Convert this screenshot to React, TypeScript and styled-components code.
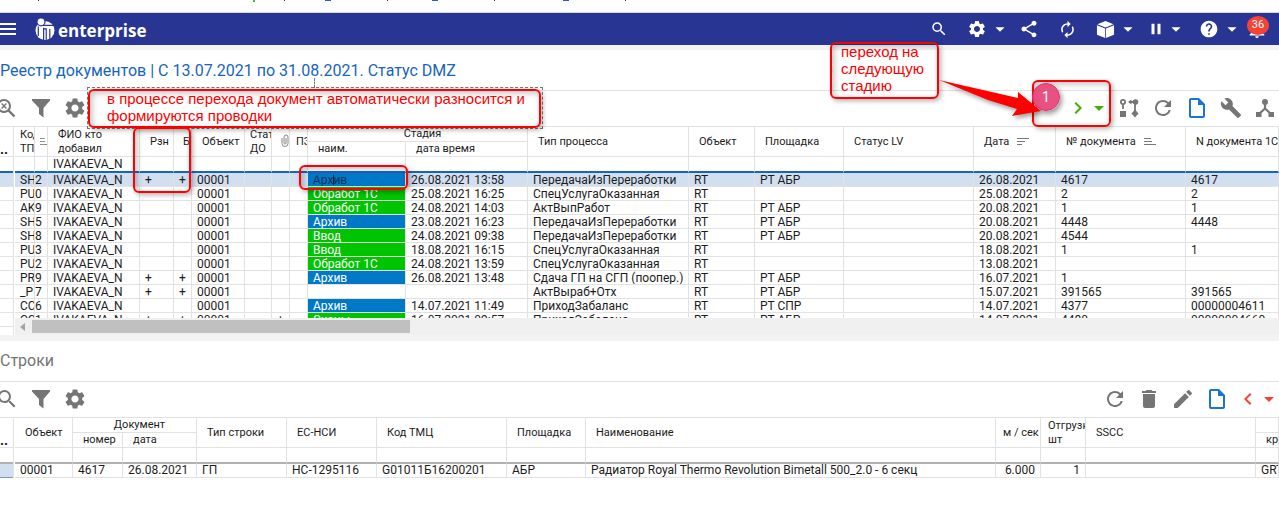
import React from "react";
import styled, { createGlobalStyle, css } from "styled-components";
import {
  MdArrowDropDown,
  MdAutorenew,
  MdBuild,
  MdChevronLeft,
  MdChevronRight,
  MdDelete,
  MdEdit,
  MdHelp,
  MdNotifications,
  MdOutlineInsertDriveFile,
  MdPause,
  MdRefresh,
  MdSearch,
  MdSettings,
  MdShare,
} from "react-icons/md";

const c = {
  bar: "#283593",
  band: "#f1f3f5",
  line: "#e2e2e2",
  accent: "#1565c0",
  icon: "#757575",
  text: "#1c1c1c",
  selected: "#d1dff1",
  green: "#00c400",
  blue: "#0078c8",
  mark: "#ff0000",
};

const GlobalStyle = createGlobalStyle`
  * { box-sizing: border-box; }
  body { margin: 0; background: #fff; color: ${c.text}; font-family: Roboto, "Liberation Sans", sans-serif; overflow: hidden; }
`;

const Page = styled.div`
  position: relative;
  overflow: hidden;
`;

const TopStrip = styled.div`
  height: 13px;
  border-bottom: 1px solid #d6d6d6;
  svg { display: block; }
`;

const AppBar = styled.header`
  height: 32px;
  display: flex;
  align-items: center;
  background: ${c.bar};
  color: #fff;
  padding-right: 8px;
`;

const MenuButton = styled.button`
  border: 0;
  padding: 0;
  background: none;
  display: flex;
  margin-right: 18px;
`;

const Brand = styled.a`
  display: flex;
  align-items: center;
  gap: 3px;
  color: #fff;
  text-decoration: none;
  font: 700 17px/24px "Open Sans", sans-serif;
`;

const BrandName = styled.span`
  padding-top: 3px;
`;

const BarTools = styled.div`
  display: flex;
  align-items: center;
  margin-left: auto;
`;

const BarButton = styled.button<{ $width?: number; $before?: number }>`
  position: relative;
  width: ${(p) => p.$width ?? 24}px;
  height: 32px;
  margin: 0 0 0 ${(p) => p.$before ?? 0}px;
  padding: 0;
  border: 0;
  background: none;
  color: #fff;
  display: flex;
  align-items: center;
  justify-content: center;
  flex: none;
`;

const BellButton = styled(BarButton)`
  align-items: flex-end;
  padding-bottom: 5px;
`;

const Badge = styled.span`
  position: absolute;
  top: 3px;
  left: 4px;
  width: 22px;
  height: 19px;
  border-radius: 50%;
  background: #f44336;
  font: 11px/18px Roboto, sans-serif;
  text-align: center;
`;

const Band = styled.div<{ $height: number }>`
  height: ${(p) => p.$height}px;
  background: ${c.band};
`;

const PanelTitle = styled.h2<{ $accent?: boolean }>`
  margin: 0;
  height: 41px;
  border-bottom: 1px solid ${c.line};
  color: ${(p) => (p.$accent ? c.accent : c.icon)};
  font-size: 16px;
  line-height: ${(p) => (p.$accent ? 42 : 40)}px;
  font-weight: 400;
  white-space: nowrap;
`;

const Toolbar = styled.div`
  height: 36px;
  display: flex;
  align-items: flex-start;
  padding-top: 3px;
  justify-content: space-between;
  border-bottom: 1px solid ${c.line};
  overflow: hidden;
`;

const ToolSet = styled.div<{ $bleed?: boolean }>`
  display: flex;
  gap: 6px;
  margin-left: ${(p) => (p.$bleed ? -7 : 0)}px;
`;

const ToolPair = styled.div`
  display: flex;
`;

const ToolButton = styled.button<{ $width?: number; $color?: string }>`
  width: ${(p) => p.$width ?? 28}px;
  height: 28px;
  padding: 0;
  border: 0;
  background: none;
  color: ${(p) => p.$color ?? c.icon};
  display: flex;
  align-items: center;
  justify-content: center;
  svg { flex: none; }
`;

const GridPane = styled.div`
  display: flex;
  gap: 1px;
`;

const Gutter = styled.div`
  flex: none;
  width: 14px;
  overflow: hidden;
  border-right: 1px solid ${c.line};
`;

const GutterHead = styled.div`
  height: 30px;
  border-bottom: 1px solid ${c.line};
  font: 700 14px/45px Roboto, sans-serif;
  overflow: hidden;
`;

const GutterFilter = styled.div<{ $rule: string }>`
  height: 16px;
  border-bottom: 2px solid ${(p) => p.$rule};
`;

const GutterRow = styled.div<{ $selected?: boolean; $edge?: string }>`
  height: 14px;
  border-bottom: 1px solid ${(p) => p.$edge ?? c.line};
  background: ${(p) => (p.$selected ? c.selected : "#fff")};
`;

const GridMain = styled.div`
  flex: 1;
  min-width: 0;
`;

const GridView = styled.div<{ $height?: number }>`
  height: ${(p) => (p.$height ? p.$height + "px" : "auto")};
  overflow: hidden;
`;

const HeadRow = styled.tr`
  height: 15px;
`;

const Th = styled.th<{ $pad?: number; $center?: boolean }>`
  padding: 0 0 0 ${(p) => p.$pad ?? 10}px;
  border-right: 1px solid ${c.line};
  border-bottom: 1px solid ${c.line};
  font-size: 11px;
  line-height: 14px;
  font-weight: 400;
  text-align: ${(p) => (p.$center ? "center" : "left")};
  vertical-align: middle;
  white-space: nowrap;
  overflow: hidden;
  svg { vertical-align: -1px; }
`;

const ThLabel = styled.span`
  margin-right: 8px;
`;

const Row = styled.tr<{ $selected?: boolean }>`
  background: ${(p) => (p.$selected ? c.selected : "transparent")};
`;

const cell = css`
  padding: 0 0 0 5px;
  border-right: 1px solid ${c.line};
  font-size: 12px;
  white-space: nowrap;
  overflow: hidden;
`;

const FilterCell = styled.td<{ $rule: string }>`
  ${cell}
  height: 16px;
  line-height: 14px;
  border-bottom: 2px solid ${(p) => p.$rule};
`;

const Td = styled.td<{ $fill?: string; $color?: string; $right?: boolean; $tight?: boolean }>`
  ${cell}
  height: 14px;
  line-height: 13px;
  border-bottom: 1px solid ${c.line};
  ${(p) => p.$tight && "padding-left: 0;"}
  ${(p) => p.$right && "text-align: right; padding-right: 5px;"}
  ${(p) => p.$fill && `background: ${p.$fill}; background-clip: padding-box;`}
  color: ${(p) => p.$color ?? "inherit"};
`;

const Table = styled.table<{ $low?: boolean }>`
  width: 100%;
  table-layout: fixed;
  border-collapse: separate;
  border-spacing: 0;
  ${(p) => p.$low && css`
    ${Th}[rowspan] { padding-top: 1px; }
    ${Td} { padding-top: 2px; line-height: 11px; }
  `}
`;

const ScrollTrack = styled.div`
  height: 17px;
  padding: 2px 0 2px 5px;
  display: flex;
  align-items: center;
  gap: 7px;
  background: #f0f0f0;
`;

const ScrollArrow = styled.span`
  border: 4px solid transparent;
  border-left: 0;
  border-right: 5px solid #a3a3a3;
`;

const ScrollThumb = styled.div`
  width: 30%;
  height: 13px;
  background: #c0c0c0;
`;

/* Review marks lie over the application window. */
const Mark = styled.div<{ $top: number; $left?: number; $right?: number; $w: number; $h: number; $solid?: boolean }>`
  position: absolute;
  top: ${(p) => p.$top}px;
  ${(p) => (p.$left !== undefined ? `left: ${p.$left}px;` : `right: ${p.$right}px;`)}
  width: ${(p) => p.$w}px;
  height: ${(p) => p.$h}px;
  border: 2px solid ${c.mark};
  border-radius: 6px;
  background: ${(p) => (p.$solid ? "#fff" : "transparent")};
  box-shadow: 2px 2px 5px rgba(0, 0, 0, 0.3), inset 2px 2px 6px rgba(0, 0, 0, 0.25);
  pointer-events: none;
`;

const NoteText = styled.p<{ $pad: number }>`
  margin: -1px 0 0;
  padding-left: ${(p) => p.$pad}px;
  color: ${c.mark};
  font: 15px/17px "Liberation Sans", Arial, sans-serif;
  white-space: nowrap;
`;

const Selection = styled.div`
  position: absolute;
  top: 87px;
  left: 87px;
  width: 456px;
  height: 42px;
  border: 1px dashed #777;
  &::before {
    content: "";
    position: absolute;
    left: 226px;
    top: -10px;
    height: 10px;
    border-left: 1px dashed #777;
  }
`;

const StepDot = styled.div`
  position: absolute;
  top: 83px;
  right: 219px;
  width: 28px;
  height: 28px;
  border-radius: 50%;
  background: rgba(232, 62, 118, 0.9);
  border: 1px solid #e0336c;
  box-shadow: 2px 3px 5px rgba(0, 0, 0, 0.4);
  color: #fff;
  font-size: 14px;
  line-height: 26px;
  text-align: center;
`;

const Arrow = styled.svg`
  position: absolute;
  top: 76px;
  right: 234px;
  filter: drop-shadow(2px 3px 2px rgba(0, 0, 0, 0.35));
`;

const TextCaret = styled.i`
  display: inline-block;
  width: 1px;
  height: 10px;
  margin-right: -1px;
  background: #10253c;
  vertical-align: -1px;
`;

const Burger = () => (
  <svg width="17" height="14" viewBox="0 0 17 14" aria-hidden="true">
    <path d="M0 2h16M0 7h16M0 12h16" stroke="#fff" strokeWidth="2" />
  </svg>
);

const Logo = () => (
  <svg width="20" height="23" viewBox="0 0 20 23" aria-hidden="true">
    <circle cx="10" cy="12.500" r="9.500" fill="#fff" />
    <circle cx="6" cy="3.800" r="4.600" fill={c.bar} />
    <path d="M3.300 8.400v9.600M8.600 9.800v12.500M8 7.400h10.500M9 10.900h2.200v10.800M14.800 11v9.800" stroke={c.bar} strokeWidth="1.200" fill="none" />
    <circle cx="6" cy="3.800" r="3.400" fill="#fff" />
  </svg>
);

const Cube = () => (
  <svg width="19" height="19" viewBox="0 0 20 20" aria-hidden="true">
    <path d="M10 1l8.500 3.400L10 7.900 1.500 4.400z" fill="#fff" />
    <path d="M1 5.500l8.600 3.500v10L1 15.400z" fill="#fff" />
    <path d="M19 5.500L10.400 9v10l8.600-3.600z" fill="#fff" />
  </svg>
);

const SearchClear = () => (
  <svg width="22" height="22" viewBox="0 0 22 22" fill="none" stroke="currentColor" aria-hidden="true">
    <circle cx="8" cy="9" r="6" strokeWidth="2" />
    <path d="M12.500 13.500l6 6" strokeWidth="2.400" />
    <path d="M5.600 6.600l4.800 4.800M10.400 6.600l-4.800 4.800" strokeWidth="1.400" />
  </svg>
);

const Funnel = () => (
  <svg width="20" height="20" viewBox="0 0 20 20" fill="currentColor" aria-hidden="true">
    <path d="M1 1h18v1.500l-6.500 7.500V19.500l-4.500-3.500v-6L1 2.500z" />
  </svg>
);

const Flow = () => (
  <svg width="20" height="20" viewBox="0 0 20 20" fill="none" stroke="currentColor" strokeWidth="1.800" aria-hidden="true">
    <circle cx="4" cy="4" r="2.100" />
    <path d="M4 6.500V11M10 4h6M16 4v9" />
    <path d="M12.500 1.500v5L9 4z" fill="currentColor" stroke="none" />
    <circle cx="16.500" cy="4" r="2.800" fill="currentColor" stroke="none" />
    <path d="M1 13h6v6H1zM16 11.500l3.500 4-3.500 4-3.500-4z" fill="currentColor" stroke="none" />
  </svg>
);

const Tree = () => (
  <svg width="20" height="20" viewBox="0 0 20 20" fill="none" stroke="currentColor" strokeWidth="2.200" aria-hidden="true">
    <path d="M10 4v7M10 10.500L3.500 16.500M10 10.500l6.500 6" />
    <circle cx="10" cy="4" r="3" fill="currentColor" stroke="none" />
    <path d="M1 14h5.500v5H1zM13.500 14H19v5h-5.500z" fill="currentColor" stroke="none" />
  </svg>
);

const SortDown = () => (
  <svg width="12" height="9" viewBox="0 0 12 9" stroke="#777" aria-hidden="true">
    <path d="M0 1.500h12M0 4.500h8M0 7.500h5" />
  </svg>
);

const SortUp = ({ w = 12 }: { w?: number }) => (
  <svg width={w} height="9" viewBox="0 0 12 9" preserveAspectRatio="none" stroke="#777" aria-hidden="true">
    <path d="M0 1.500h7M0 4.500h8M0 7.500h12" />
  </svg>
);

const Clip = () => (
  <svg width="8" height="13" viewBox="0 0 8 13" fill="none" stroke="#888" aria-hidden="true">
    <path d="M1 4v5.500a3 3 0 0 0 6 0V3a2 2 0 0 0-4 0v6a1 1 0 0 0 2 0V4" />
  </svg>
);

const Caret = () => <MdArrowDropDown size={24} />;

const docCols = [20, 13, 92, 34, 18, 53, 27, 18, 18, 98, 122, 161, 66, 89, 130, 82, 130];

type Doc = {
  kind: string; no: string; p?: boolean; clip?: string; stage?: string; at?: string;
  process: string; object: string; site?: string; date: string; num?: string; num1c?: string;
};

const docs: Doc[] = [
  { kind: "SH", no: "2", p: true, stage: "Архив", at: "26.08.2021 13:58", process: "ПередачаИзПереработки", object: "RT", site: "РТ АБР", date: "26.08.2021", num: "4617", num1c: "4617" },
  { kind: "PU", no: "0", stage: "Обработ 1С", at: "25.08.2021 16:25", process: "СпецУслугаОказанная", object: "RT", date: "25.08.2021", num: "2", num1c: "2" },
  { kind: "AK", no: "9", stage: "Обработ 1С", at: "24.08.2021 14:03", process: "АктВыпРабот", object: "RT", site: "РТ АБР", date: "20.08.2021", num: "1", num1c: "1" },
  { kind: "SH", no: "5", stage: "Архив", at: "23.08.2021 16:23", process: "ПередачаИзПереработки", object: "RT", site: "РТ АБР", date: "20.08.2021", num: "4448", num1c: "4448" },
  { kind: "SH", no: "8", stage: "Ввод", at: "24.08.2021 09:38", process: "ПередачаИзПереработки", object: "RT", site: "РТ АБР", date: "20.08.2021", num: "4544" },
  { kind: "PU", no: "3", stage: "Ввод", at: "18.08.2021 16:15", process: "СпецУслугаОказанная", object: "RT", date: "18.08.2021", num: "1", num1c: "1" },
  { kind: "PU", no: "2", stage: "Обработ 1С", at: "24.08.2021 13:59", process: "СпецУслугаОказанная", object: "RT", date: "13.08.2021" },
  { kind: "PR", no: "9", p: true, stage: "Архив", at: "26.08.2021 13:48", process: "Сдача ГП на СГП (поопер.)", object: "RT", site: "РТ АБР", date: "16.07.2021", num: "1" },
  { kind: "_P", no: "7", p: true, process: "АктВыраб+Отх", object: "RT", site: "РТ АБР", date: "15.07.2021", num: "391565", num1c: "391565" },
  { kind: "CC", no: "6", stage: "Архив", at: "14.07.2021 11:49", process: "ПриходЗабаланс", object: "RT", site: "РТ СПР", date: "14.07.2021", num: "4377", num1c: "00000004611" },
  { kind: "CC", no: "1", p: true, clip: "+", stage: "Сканы", at: "16.07.2021 09:57", process: "ПриходЗабаланс", object: "RT", site: "РТ АБР", date: "14.07.2021", num: "4480", num1c: "00000004660" },
];

const DocsGrid = () => (
  <Table $low>
    <colgroup>
      {docCols.map((w, i) => <col key={i} width={w} />)}
      <col />
    </colgroup>
    <thead>
      <HeadRow>
        <Th rowSpan={2} $pad={5}>Код<br />ТП</Th>
        <Th rowSpan={2} $pad={5}><SortUp w={8} /></Th>
        <Th rowSpan={2}>ФИО кто<br />добавил</Th>
        <Th rowSpan={2}>Рзн</Th>
        <Th rowSpan={2} $pad={9}>Бух</Th>
        <Th rowSpan={2}>Объект</Th>
        <Th rowSpan={2} $pad={5}>Стат<br />ДО</Th>
        <Th rowSpan={2} $pad={9}><Clip /></Th>
        <Th rowSpan={2} $pad={6}>ПЗ</Th>
        <Th colSpan={2} $center>Стадия</Th>
        <Th rowSpan={2}>Тип процесса</Th>
        <Th rowSpan={2}>Объект</Th>
        <Th rowSpan={2}>Площадка</Th>
        <Th rowSpan={2}>Статус LV</Th>
        <Th rowSpan={2}><ThLabel>Дата</ThLabel><SortDown /></Th>
        <Th rowSpan={2}><ThLabel>№ документа</ThLabel><SortUp /></Th>
        <Th rowSpan={2}>N документа 1С</Th>
      </HeadRow>
      <HeadRow>
        <Th>наим.</Th>
        <Th>дата время</Th>
      </HeadRow>
    </thead>
    <tbody>
      <tr>
        {Array.from({ length: 18 }, (_, i) => (
          <FilterCell key={i} $rule={c.accent}>{i === 2 ? "IVAKAEVA_N" : null}</FilterCell>
        ))}
      </tr>
      {docs.map((d, i) => (
        <Row key={i} $selected={i === 0}>
          <Td>{d.kind}</Td>
          <Td $tight>{d.no}</Td>
          <Td>IVAKAEVA_N</Td>
          <Td>{d.p && "+"}</Td>
          <Td>{d.p && "+"}</Td>
          <Td>00001</Td>
          <Td />
          <Td>{d.clip}</Td>
          <Td />
          <Td
            $fill={d.stage ? (d.stage === "Архив" ? c.blue : c.green) : undefined}
            $color={i === 0 ? "#0d3357" : "#fff"}
          >
            {i === 0 ? <>Арх<TextCaret />ив</> : d.stage}
          </Td>
          <Td>{d.at}</Td>
          <Td>{d.process}</Td>
          <Td>{d.object}</Td>
          <Td>{d.site}</Td>
          <Td />
          <Td>{d.date}</Td>
          <Td>{d.num}</Td>
          <Td>{d.num1c}</Td>
        </Row>
      ))}
    </tbody>
  </Table>
);

const lineCols = [58, 50, 74, 90, 90, 130, 79, 410, 45, 45, 170];

const LinesGrid = () => (
  <Table>
    <colgroup>
      {lineCols.map((w, i) => <col key={i} width={w} />)}
      <col />
    </colgroup>
    <thead>
      <HeadRow>
        <Th rowSpan={2}>Объект</Th>
        <Th colSpan={2} $center>Документ</Th>
        <Th rowSpan={2}>Тип строки</Th>
        <Th rowSpan={2}>ЕС-НСИ</Th>
        <Th rowSpan={2}>Код ТМЦ</Th>
        <Th rowSpan={2}>Площадка</Th>
        <Th rowSpan={2}>Наименование</Th>
        <Th rowSpan={2} $pad={7}>м / сек</Th>
        <Th rowSpan={2} $pad={7}>Отгрузка<br />шт</Th>
        <Th rowSpan={2}>SSCC</Th>
        <Th />
      </HeadRow>
      <HeadRow>
        <Th>номер</Th>
        <Th>дата</Th>
        <Th>кр</Th>
      </HeadRow>
    </thead>
    <tbody>
      <tr>
        {Array.from({ length: 12 }, (_, i) => <FilterCell key={i} $rule="#b0b0b0" />)}
      </tr>
      <Row>
        <Td>00001</Td>
        <Td>4617</Td>
        <Td>26.08.2021</Td>
        <Td>ГП</Td>
        <Td>НС-1295116</Td>
        <Td>G01011Б16200201</Td>
        <Td>АБР</Td>
        <Td>Радиатор Royal Thermo Revolution Bimetall 500_2.0 - 6 секц</Td>
        <Td $right>6.000</Td>
        <Td $right>1</Td>
        <Td />
        <Td>GRT</Td>
      </Row>
    </tbody>
  </Table>
);

export default function App() {
  return (
    <Page>
      <GlobalStyle />
      <TopStrip>
        <svg width="640" height="4" viewBox="0 0 640 4" aria-hidden="true">
          <path d="M38 0h1v1h-1zM284 0h1v1h-1zM387 0h1v1h-1zM494 0h1v1h-1zM625 0h1v1h-1z" fill="#333" />
          <path d="M253 0h2v2h-2z" fill="#4caf50" />
          <path d="M325 0h6v1h-6zM432 0h6v1h-6zM563 0h6v1h-6z" fill="#3a5ba8" />
        </svg>
      </TopStrip>

      <AppBar>
        <MenuButton aria-label="Меню"><Burger /></MenuButton>
        <Brand href="#"><Logo /><BrandName>enterprise</BrandName></Brand>
        <BarTools>
          <BarButton aria-label="Поиск"><MdSearch size={18} /></BarButton>
          <BarButton $before={14} aria-label="Настройки"><MdSettings size={20} /></BarButton>
          <BarButton $width={22} aria-label="Меню настроек"><Caret /></BarButton>
          <BarButton $before={6} aria-label="Поделиться"><MdShare size={20} /></BarButton>
          <BarButton $before={14} aria-label="Синхронизация"><MdAutorenew size={19} /></BarButton>
          <BarButton $before={14} aria-label="Модули"><Cube /></BarButton>
          <BarButton $width={22} aria-label="Меню модулей"><Caret /></BarButton>
          <BarButton $before={8} $width={18} aria-label="Пауза"><MdPause size={22} /></BarButton>
          <BarButton $width={22} aria-label="Меню паузы"><Caret /></BarButton>
          <BarButton $before={10} aria-label="Справка"><MdHelp size={20} /></BarButton>
          <BarButton $width={22} aria-label="Меню справки"><Caret /></BarButton>
          <BellButton $width={28} aria-label="Уведомления">
            <MdNotifications size={22} />
            <Badge>36</Badge>
          </BellButton>
        </BarTools>
      </AppBar>

      <Band $height={5} />

      <section>
        <PanelTitle $accent>Реестр документов | С 13.07.2021 по 31.08.2021. Статус DMZ</PanelTitle>
        <Toolbar>
          <ToolSet $bleed>
            <ToolButton aria-label="Сбросить поиск"><SearchClear /></ToolButton>
            <ToolButton aria-label="Фильтр"><Funnel /></ToolButton>
            <ToolButton aria-label="Настройки"><MdSettings size={24} /></ToolButton>
          </ToolSet>
          <ToolSet>
            <ToolPair>
              <ToolButton $width={22} $color="#43b000" aria-label="Следующая стадия"><MdChevronRight size={24} /></ToolButton>
              <ToolButton $width={20} $color="#43b000" aria-label="Выбор стадии"><Caret /></ToolButton>
            </ToolPair>
            <ToolButton aria-label="Маршрут"><Flow /></ToolButton>
            <ToolButton aria-label="Обновить"><MdRefresh size={24} /></ToolButton>
            <ToolButton $color="#1976d2" aria-label="Создать"><MdOutlineInsertDriveFile size={24} /></ToolButton>
            <ToolButton aria-label="Инструменты"><MdBuild size={22} /></ToolButton>
            <ToolButton aria-label="Связи"><Tree /></ToolButton>
          </ToolSet>
        </Toolbar>
        <GridPane>
          <Gutter>
            <GutterHead>..</GutterHead>
            <GutterFilter $rule={c.accent} />
            {Array.from({ length: 11 }, (_, i) => <GutterRow key={i} $selected={i === 0} />)}
          </Gutter>
          <GridMain>
            <GridView $height={191}><DocsGrid /></GridView>
            <ScrollTrack>
              <ScrollArrow />
              <ScrollThumb />
            </ScrollTrack>
          </GridMain>
        </GridPane>
      </section>

      <Band $height={6} />

      <section>
        <PanelTitle>Строки</PanelTitle>
        <Toolbar>
          <ToolSet $bleed>
            <ToolButton aria-label="Поиск"><MdSearch size={24} /></ToolButton>
            <ToolButton aria-label="Фильтр"><Funnel /></ToolButton>
            <ToolButton aria-label="Настройки"><MdSettings size={24} /></ToolButton>
          </ToolSet>
          <ToolSet>
            <ToolButton aria-label="Обновить"><MdRefresh size={24} /></ToolButton>
            <ToolButton aria-label="Удалить"><MdDelete size={24} /></ToolButton>
            <ToolButton aria-label="Изменить"><MdEdit size={24} /></ToolButton>
            <ToolButton $color="#1976d2" aria-label="Создать"><MdOutlineInsertDriveFile size={24} /></ToolButton>
            <ToolPair>
              <ToolButton $width={22} $color="#f44336" aria-label="Предыдущая стадия"><MdChevronLeft size={24} /></ToolButton>
              <ToolButton $width={20} $color="#f44336" aria-label="Выбор стадии"><Caret /></ToolButton>
            </ToolPair>
          </ToolSet>
        </Toolbar>
        <GridPane>
          <Gutter>
            <GutterHead>..</GutterHead>
            <GutterFilter $rule="#b0b0b0" />
            <GutterRow $selected $edge="#8496b0" />
          </Gutter>
          <GridMain>
            <GridView><LinesGrid /></GridView>
          </GridMain>
        </GridPane>
      </section>

      <Selection />
      <Mark $top={89} $left={88} $w={453} $h={39} $solid>
        <NoteText $pad={17}>
          в процессе перехода документ автоматически разносится и<br />формируются проводки
        </NoteText>
      </Mark>
      <Mark $top={127} $left={133} $w={58} $h={66} />
      <Mark $top={165} $left={299} $w={109} $h={25} />
      <Mark $top={42} $right={340} $w={109} $h={57}>
        <NoteText $pad={9}>переход на<br />следующую<br />стадию</NoteText>
      </Mark>
      <Mark $top={80} $right={168} $w={79} $h={47} />
      <StepDot>1</StepDot>
      <Arrow width="110" height="46" viewBox="0 0 110 46" aria-hidden="true">
        <path d="M4 4l79 18v-6l23 19-29 5 5-7L53 24z" fill={c.mark} />
      </Arrow>
    </Page>
  );
}
